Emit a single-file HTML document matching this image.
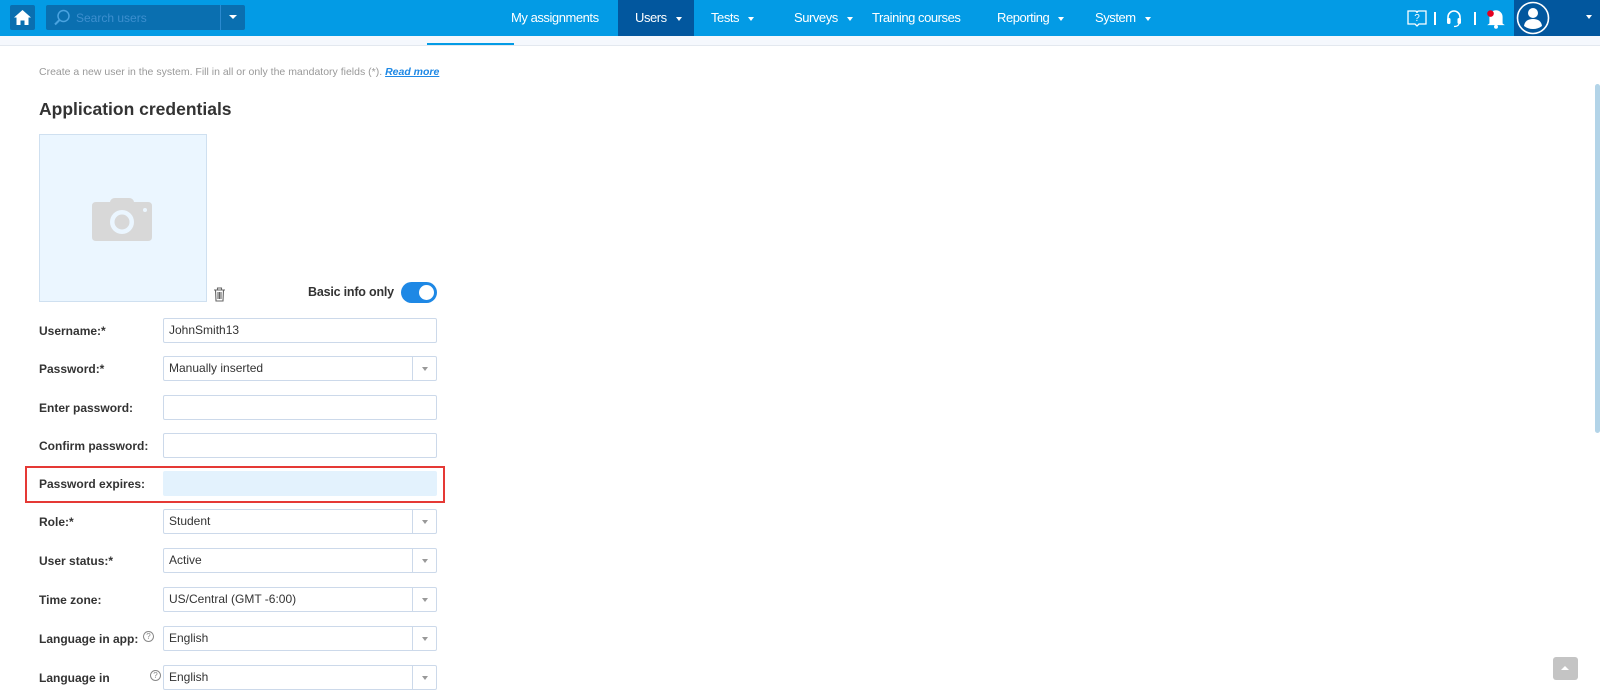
<!DOCTYPE html>
<html><head><meta charset="utf-8"><style>
*{box-sizing:border-box;margin:0;padding:0}
body{width:1600px;height:699px;overflow:hidden;background:#fff;font-family:"Liberation Sans",sans-serif;position:relative;color:#333}
.a{position:absolute}
.top{left:0;top:0;width:1600px;height:36px;background:#039be5}
.nav{top:0;height:36px;line-height:36px;color:#fff;font-size:13px;letter-spacing:-0.45px;white-space:nowrap}
.car{display:inline-block;width:0;height:0;border-left:3.5px solid transparent;border-right:3.5px solid transparent;border-top:4px solid #fff;margin-left:9px;vertical-align:middle}
.lbl{left:39px;font-size:12px;font-weight:bold;color:#333}
.inp{left:163px;width:274px;height:25px;border:1px solid #ccd9ea;border-radius:2px;font-size:12px;line-height:23px;padding-left:5px;color:#333;background:#fff}
.sel:after{content:"";position:absolute;right:0;top:0;width:23px;height:23px;border-left:1px solid #ccd9ea}
.sel:before{content:"";position:absolute;right:8px;top:10px;border-left:3.5px solid transparent;border-right:3.5px solid transparent;border-top:4px solid #999}
.q{width:11px;height:11px;border:1px solid #888;border-radius:50%;font-size:8px;line-height:9px;text-align:center;color:#888;font-weight:normal}
</style></head><body>
<div class="a top"></div>
<div class="a" style="left:10px;top:5px;width:25px;height:25px;background:#0a6fb0;border-radius:2px">
<svg width="25" height="25" viewBox="0 0 25 25"><path d="M12.5 5 L21 12.5 H18.5 V20 H14.5 V15.5 H10.5 V20 H6.5 V12.5 H4 Z" fill="#fff"/></svg></div>
<div class="a" style="left:46px;top:5px;width:199px;height:25px;background:#0a6fb0;border-radius:2px"></div>
<div class="a" style="left:220px;top:5px;width:1px;height:25px;background:#2b8ad0"></div>
<svg class="a" style="left:52px;top:8px" width="20" height="20" viewBox="0 0 20 20"><circle cx="11.5" cy="8" r="5.5" fill="none" stroke="#4aa3e0" stroke-width="1.5"/><path d="M7.5 12 L3 16.5" stroke="#4aa3e0" stroke-width="2"/></svg>
<div class="a" style="left:76px;top:11px;font-size:12px;color:#3d8fcf">Search users</div>
<div class="a" style="left:229px;top:15px;border-left:4px solid transparent;border-right:4px solid transparent;border-top:4px solid #fff"></div>
<div class="a" style="left:618px;top:0;width:76px;height:36px;background:#02579e"></div>
<div class="a nav" style="left:511px">My assignments</div>
<div class="a nav" style="left:635px">Users<span class="car"></span></div>
<div class="a nav" style="left:711px">Tests<span class="car"></span></div>
<div class="a nav" style="left:794px">Surveys<span class="car"></span></div>
<div class="a nav" style="left:872px">Training courses</div>
<div class="a nav" style="left:997px">Reporting<span class="car"></span></div>
<div class="a nav" style="left:1095px">System<span class="car"></span></div>
<svg class="a" style="left:1406px;top:8px" width="22" height="20" viewBox="0 0 22 20"><path d="M2 3 H9 Q11 3 11 5 Q11 3 13 3 H20 V16 H13 L11 18 L9 16 H2 Z" fill="none" stroke="#fff" stroke-width="1.3"/><text x="11" y="13" font-size="10" fill="#fff" text-anchor="middle" font-family="Liberation Sans">?</text></svg>
<div class="a" style="left:1434px;top:12px;width:2px;height:13px;background:#fff"></div>
<svg class="a" style="left:1444px;top:8px" width="20" height="20" viewBox="0 0 20 20"><path d="M4 12 V9 A6 6 0 0 1 16 9 V12" fill="none" stroke="#fff" stroke-width="1.6"/><rect x="3" y="10" width="3.5" height="6" rx="1.5" fill="#fff"/><rect x="13.5" y="10" width="3.5" height="6" rx="1.5" fill="#fff"/><path d="M15 16 Q14 18.5 10 18.5" stroke="#fff" fill="none" stroke-width="1.2"/></svg>
<div class="a" style="left:1474px;top:12px;width:2px;height:13px;background:#fff"></div>
<svg class="a" style="left:1485px;top:7px" width="22" height="22" viewBox="0 0 20 20"><path d="M4 15 V9 A6 6 0 0 1 16 9 V15 L18 16.5 H2 Z" fill="#fff"/><circle cx="10" cy="18" r="1.8" fill="#fff"/><circle cx="5" cy="6" r="3" fill="#e5001f"/></svg>
<div class="a" style="left:1514px;top:0;width:86px;height:36px;background:#02579e"></div>
<svg class="a" style="left:1516px;top:1px" width="34" height="34" viewBox="0 0 34 34"><circle cx="17" cy="17" r="15.5" fill="none" stroke="#fff" stroke-width="1.6"/><circle cx="17" cy="12" r="5" fill="#fff"/><path d="M8 25 Q9 18 17 18 Q25 18 26 25 Q22 28 17 28 Q12 28 8 25 Z" fill="#fff"/></svg>
<div class="a" style="left:1586px;top:15px;border-left:3.5px solid transparent;border-right:3.5px solid transparent;border-top:4px solid #fff"></div>
<div class="a" style="left:0;top:36px;width:1600px;height:10px;background:#f5f8fd;border-bottom:1px solid #e3e8ef"></div>
<div class="a" style="left:427px;top:43px;width:87px;height:2px;background:#039be5"></div>
<div class="a" style="left:39px;top:66px;font-size:10.5px;color:#999">Create a new user in the system. Fill in all or only the mandatory fields (*). <i style="color:#1e88e5;text-decoration:underline;font-weight:bold">Read more</i></div>
<div class="a" style="left:39px;top:99px;font-size:17.5px;font-weight:bold;color:#333">Application credentials</div>
<div class="a" style="left:39px;top:134px;width:168px;height:168px;background:#ebf6ff;border:1px solid #cfe0f0"></div>
<svg class="a" style="left:92px;top:197px" width="60" height="44" viewBox="0 0 60 44"><path d="M18 5 Q19 1 23 1 H37 Q41 1 42 5 H56 Q60 5 60 9 V40 Q60 44 56 44 H4 Q0 44 0 40 V9 Q0 5 4 5 Z" fill="#d8d8d8"/><circle cx="30" cy="25" r="12" fill="#ebf6ff"/><circle cx="30" cy="25" r="7.5" fill="#d8d8d8"/><circle cx="53" cy="13" r="2" fill="#ebf6ff"/></svg>
<svg class="a" style="left:213px;top:287px" width="13" height="15" viewBox="0 0 13 15"><path d="M1 3 H12 M4.5 3 V1 H8.5 V3 M2.5 3 L3 14 H10 L10.5 3 M5 5 V12 M6.5 5 V12 M8 5 V12" stroke="#666" fill="none" stroke-width="1.1"/></svg>
<div class="a" style="left:308px;top:285px;font-size:12.5px;font-weight:bold;letter-spacing:-0.2px">Basic info only</div>
<div class="a" style="left:401px;top:282px;width:36px;height:21px;border-radius:11px;background:#1e88e5"><div class="a" style="left:18px;top:3px;width:15px;height:15px;border-radius:50%;background:#fff"></div></div>
<div class="a lbl" style="top:324px">Username:*</div><div class="a inp" style="top:318px">JohnSmith13</div>
<div class="a lbl" style="top:362px">Password:*</div><div class="a inp sel" style="top:356px">Manually inserted</div>
<div class="a lbl" style="top:401px">Enter password:</div><div class="a inp" style="top:395px"></div>
<div class="a lbl" style="top:439px">Confirm password:</div><div class="a inp" style="top:433px"></div>
<div class="a" style="left:25px;top:466px;width:420px;height:37px;border:2px solid #e53935"></div>
<div class="a lbl" style="top:477px">Password expires:</div><div class="a" style="left:163px;top:471px;width:274px;height:25px;background:#e3f2fd;border-radius:2px"></div>
<div class="a lbl" style="top:515px">Role:*</div><div class="a inp sel" style="top:509px">Student</div>
<div class="a lbl" style="top:554px">User status:*</div><div class="a inp sel" style="top:548px">Active</div>
<div class="a lbl" style="top:593px">Time zone:</div><div class="a inp sel" style="top:587px">US/Central (GMT -6:00)</div>
<div class="a lbl" style="top:632px">Language in app:</div><div class="a q" style="left:143px;top:631px">?</div><div class="a inp sel" style="top:626px">English</div>
<div class="a lbl" style="top:671px">Language in</div><div class="a q" style="left:150px;top:670px">?</div><div class="a inp sel" style="top:665px">English</div>
<div class="a" style="left:1595px;top:84px;width:5px;height:349px;background:#b3d4e8;border-radius:3px"></div>
<div class="a" style="left:1553px;top:657px;width:25px;height:23px;background:#c4c4c4;border-radius:3px"><div class="a" style="left:8px;top:9px;border-left:4.5px solid transparent;border-right:4.5px solid transparent;border-bottom:4px solid #fff"></div></div>
</body></html>
